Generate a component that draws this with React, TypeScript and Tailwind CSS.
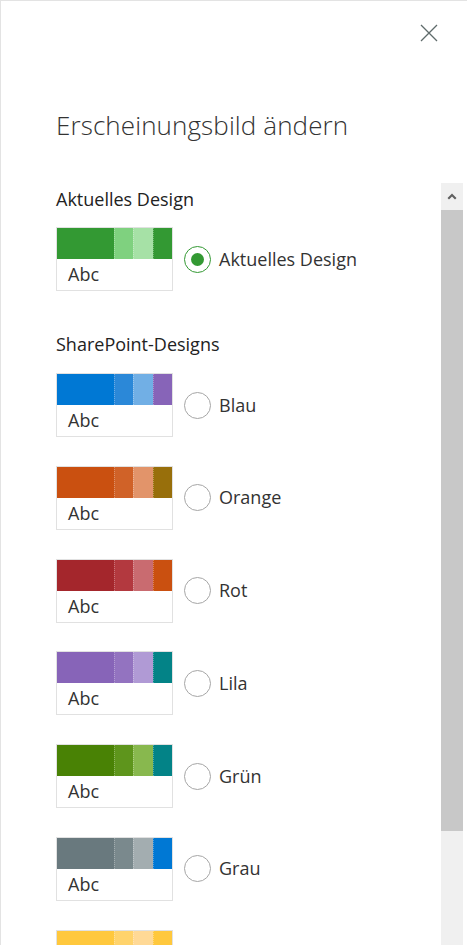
import React from 'react';

type Theme = { name: string; colors: [string, string, string, string]; selected?: boolean };

const current: Theme = { name: 'Aktuelles Design', colors: ['#339933', '#7fd17f', '#a6e1a6', '#339933'], selected: true };

const themes: Theme[] = [
  { name: 'Blau', colors: ['#0078d4', '#2b88d8', '#71afe5', '#8764b8'] },
  { name: 'Orange', colors: ['#ca5010', '#d06228', '#e2946a', '#986f0b'] },
  { name: 'Rot', colors: ['#a4262c', '#b3393f', '#c96b70', '#ca5010'] },
  { name: 'Lila', colors: ['#8764b8', '#9373c0', '#b09ad5', '#038387'] },
  { name: 'Grün', colors: ['#498205', '#5e951c', '#88b84e', '#038387'] },
  { name: 'Grau', colors: ['#69797e', '#7a898d', '#a3adb0', '#0078d4'] },
  { name: 'Gelb', colors: ['#ffc83d', '#ffd36c', '#ffd996', '#ffc83d'] },
];

const Swatch = ({ colors }: { colors: Theme['colors'] }) => (
  <div className="w-[117px] h-[64px] shrink-0 border border-[#e1e1e1] bg-white flex flex-col">
    <div className="h-[31px] flex">
      <div className="w-[57px]" style={{ backgroundColor: colors[0] }} />
      <div className="w-[19px] border-l border-dotted border-white/30" style={{ backgroundColor: colors[1] }} />
      <div className="w-[20px] border-l border-dotted border-white/30" style={{ backgroundColor: colors[2] }} />
      <div className="w-[19px] border-l border-dotted border-white/30" style={{ backgroundColor: colors[3] }} />
    </div>
    <div className="pl-[11px] pt-[1px] text-[18px] leading-[28px] text-[#333]">Abc</div>
  </div>
);

const Radio = ({ selected }: { selected?: boolean }) => (
  <div
    className={`w-[27px] h-[27px] rounded-full border flex items-center justify-center shrink-0 ${
      selected ? 'border-[#339933]' : 'border-[#a6a6a6]'
    }`}
  >
    {selected && <div className="w-[13px] h-[13px] rounded-full bg-[#339933]" />}
  </div>
);

const ThemeRow = ({ theme }: { theme: Theme }) => (
  <div className="flex items-center">
    <Swatch colors={theme.colors} />
    <div className="ml-[11px]">
      <Radio selected={theme.selected} />
    </div>
    <span className="ml-[8px] text-[18px] text-[#333]">{theme.name}</span>
  </div>
);

export default function App() {
  return (
    <div
      className="w-[467px] h-[945px] bg-white border-l border-t border-[#e3e3e3] overflow-hidden flex flex-col"
      style={{ fontFamily: '"Open Sans", "Noto Sans", sans-serif' }}
    >
      {/* Header */}
      <div className="h-[182px] shrink-0 relative">
        <button className="absolute left-[418px] top-[22px] w-[20px] h-[20px] flex items-center justify-center">
          <svg width="18" height="18" viewBox="0 0 18 18" fill="none" stroke="#5f6b6b" strokeWidth="1.3">
            <path d="M1 1 L17 17 M17 1 L1 17" />
          </svg>
        </button>
        <h1 className="absolute left-[55px] top-[106px] text-[26px] leading-[36px] font-light text-[#333] tracking-[0.1px]">
          Erscheinungsbild ändern
        </h1>
      </div>

      {/* Scrollable body */}
      <div className="flex-1 flex min-h-0">
        <div className="flex-1 pl-[55px] pt-[4px] overflow-hidden">
          <h2 className="text-[18px] leading-[24px] text-[#222]">Aktuelles Design</h2>
          <div className="mt-[16px]">
            <ThemeRow theme={current} />
          </div>
          <h2 className="mt-[41px] text-[18px] leading-[24px] text-[#222]">SharePoint-Designs</h2>
          <div className="mt-[17px] flex flex-col gap-[28.8px]">
            {themes.map((t) => (
              <ThemeRow key={t.name} theme={t} />
            ))}
          </div>
        </div>

        {/* Scrollbar */}
        <div className="w-[22px] mr-[4px] bg-[#f0f0f0] flex flex-col shrink-0">
          <div className="h-[27px] flex items-center justify-center">
            <svg width="10" height="7" viewBox="0 0 10 7" fill="#606060">
              <path d="M5 0.5 L9.5 5 L8 6.5 L5 3.5 L2 6.5 L0.5 5 Z" />
            </svg>
          </div>
          <div className="h-[621px] bg-[#c8c8c8]" />
        </div>
      </div>
    </div>
  );
}
